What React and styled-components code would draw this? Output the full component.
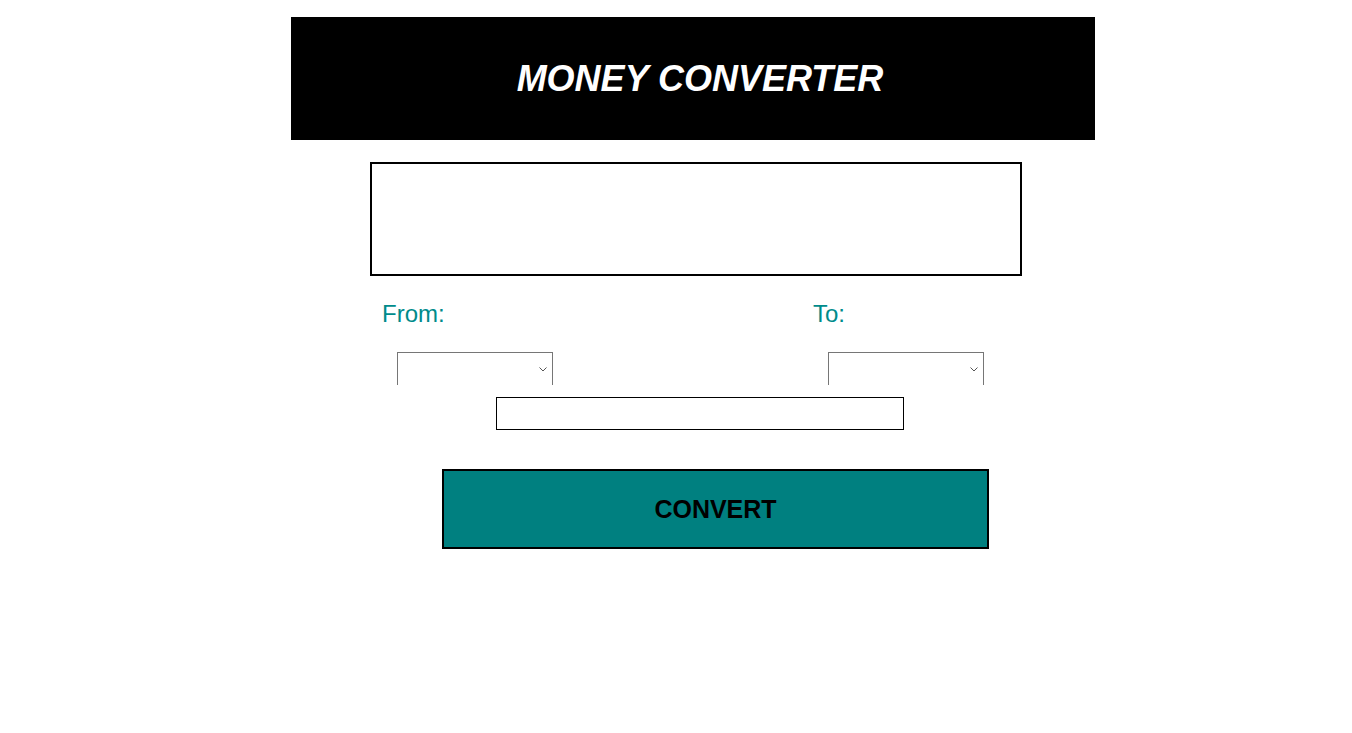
import React from "react";
import styled, { createGlobalStyle } from "styled-components";

const GlobalStyle = createGlobalStyle`
  body {
    margin: 0;
    background: #fff;
    font-family: "Liberation Sans", Arial, sans-serif;
  }
`;

const Page = styled.div`
  padding: 17px 0 0 291px;
  display: flex;
  flex-direction: column;
  align-items: flex-start;
`;

const Header = styled.header`
  width: 804px;
  height: 123px;
  background: #000;
  display: flex;
  align-items: center;
  justify-content: center;
  padding-left: 14px;
  box-sizing: border-box;
`;

const Title = styled.h1`
  margin: 0;
  color: #fff;
  font-size: 36px;
  font-weight: bold;
  font-style: italic;
`;

const Result = styled.div`
  margin: 22px 0 0 79px;
  width: 652px;
  height: 114px;
  border: 2px solid #000;
  box-sizing: border-box;
`;

const Labels = styled.div`
  margin: 24px 0 0 91px;
  display: flex;
`;

const Label = styled.span`
  width: ${(p) => p.$w}px;
  font-size: 24px;
  color: #008b8b;
`;

const Selects = styled.div`
  margin: 24px 0 0 106px;
  display: flex;
  gap: 275px;
`;

const Clip = styled.div`
  position: relative;
  height: 33px;
  overflow: hidden;
`;

const Select = styled.select`
  appearance: none;
  display: block;
  width: 156px;
  height: 35px;
  margin: 0;
  background: #fff;
  border: 1px solid #767676;
  border-radius: 0;
`;

const Chevron = styled.svg`
  position: absolute;
  right: 6px;
  top: 15px;
  pointer-events: none;
`;

const Amount = styled.input`
  margin: 12px 0 0 205px;
  width: 408px;
  height: 33px;
  box-sizing: border-box;
  border: 1px solid #000;
  padding: 0 4px;
  outline: none;
`;

const ConvertButton = styled.button`
  margin: 39px 0 0 151px;
  width: 547px;
  height: 80px;
  box-sizing: border-box;
  border: 2px solid #000;
  background: #008080;
  color: #000;
  font-family: "Liberation Sans", Arial, sans-serif;
  font-size: 25px;
  font-weight: bold;
  cursor: pointer;
`;

const CurrencySelect = () => (
  <Clip>
    <Select />
    <Chevron width="8" height="5" viewBox="0 0 8 5">
      <path d="M0.5 0.5 L4 4 L7.5 0.5" fill="none" stroke="#555" strokeWidth="1" />
    </Chevron>
  </Clip>
);

export default function App() {
  return (
    <>
      <GlobalStyle />
      <Page>
        <Header>
          <Title>MONEY CONVERTER</Title>
        </Header>
        <Result />
        <Labels>
          <Label $w={431}>From:</Label>
          <Label $w={60}>To:</Label>
        </Labels>
        <Selects>
          <CurrencySelect />
          <CurrencySelect />
        </Selects>
        <Amount type="text" />
        <ConvertButton>CONVERT</ConvertButton>
      </Page>
    </>
  );
}
